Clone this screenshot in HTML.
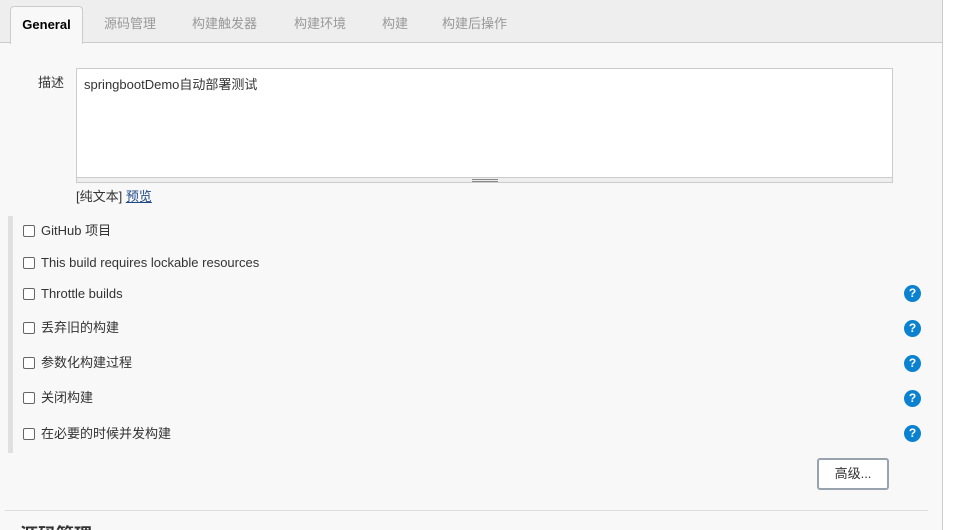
<!DOCTYPE html>
<html><head><meta charset="utf-8"><style>
*{margin:0;padding:0;box-sizing:border-box}
html,body{width:958px;height:530px;overflow:hidden}
body{background:#fff;font-family:"Liberation Sans","Noto Sans CJK SC",sans-serif;font-size:13px;color:#333;position:relative}
.main{position:absolute;left:0;top:0;width:943px;height:530px;background:#f8f8f8;border-right:1px solid #ccc;overflow:hidden}
.tabs{position:absolute;left:0;top:0;width:943px;height:43px;background:#eee;border-bottom:1px solid #ccc}
.tab{position:absolute;top:16px;font-size:13px;line-height:16px;color:#999}
.active{position:absolute;left:10px;top:6px;width:73px;height:38px;background:#f8f8f8;border:1px solid #ccc;border-bottom:none;border-radius:4px 4px 0 0;font-weight:bold;color:#000;text-align:center;padding-top:10px;line-height:16px}
.ta{position:absolute;left:76px;top:68px;width:817px;height:110px;background:#fff;border:1px solid #ccc;padding:8px 7px;font-size:13px;line-height:16px;color:#333}
.grip{position:absolute;left:76px;top:177px;width:817px;height:6px;background:#eee;border:1px solid #ccc}
.grip i{position:absolute;left:395px;top:1px;width:26px;height:3px;border-top:1px solid #888;border-bottom:1px solid #888}
.bar{position:absolute;left:8px;top:216px;width:5px;height:237px;background:#e0e0e0}
.row{position:absolute;left:23px;font-size:13px;line-height:16px;height:16px;color:#333;display:flex;align-items:center}
.cb{width:12px;height:12px;border:1px solid #666;border-radius:2px;background:#fff;margin-right:6px}
.h{position:absolute;left:904px;width:17px;height:17px;border-radius:50%;background:#0b82d0;color:#fff;font-weight:bold;font-size:12px;text-align:center;line-height:17px}
.btn{position:absolute;left:817px;top:458px;width:72px;height:32px;border:2px solid #99a3ad;border-radius:3px;background:#fff;text-align:center;line-height:28px;font-size:13px;color:#333}
</style></head><body>
<div class="main">
<div class="tabs">
<div class="active">General</div>
<div class="tab" style="left:104px">源码管理</div>
<div class="tab" style="left:192px">构建触发器</div>
<div class="tab" style="left:294px">构建环境</div>
<div class="tab" style="left:382px">构建</div>
<div class="tab" style="left:442px">构建后操作</div>
</div>
<div style="position:absolute;left:38px;top:75px;line-height:16px">描述</div>
<div class="ta">springbootDemo自动部署测试</div>
<div class="grip"><i></i></div>
<div style="position:absolute;left:76px;top:189px;line-height:16px">[纯文本] <span style="color:#204a87;text-decoration:underline">预览</span></div>
<div class="bar"></div>
<div class="row" style="top:223px"><span class="cb"></span>GitHub 项目</div>
<div class="row" style="top:255px"><span class="cb"></span>This build requires lockable resources</div>
<div class="row" style="top:286px"><span class="cb"></span>Throttle builds</div>
<div class="row" style="top:320px"><span class="cb"></span>丢弃旧的构建</div>
<div class="row" style="top:355px"><span class="cb"></span>参数化构建过程</div>
<div class="row" style="top:390px"><span class="cb"></span>关闭构建</div>
<div class="row" style="top:426px"><span class="cb"></span>在必要的时候并发构建</div>
<div class="h" style="top:285px">?</div>
<div class="h" style="top:320px">?</div>
<div class="h" style="top:355px">?</div>
<div class="h" style="top:390px">?</div>
<div class="h" style="top:425px">?</div>
<div class="btn">高级...</div>
<div style="position:absolute;left:5px;top:510px;width:923px;height:1px;background:#ddd"></div>
<div style="position:absolute;left:20px;top:524px;font-size:18px;line-height:22px;font-weight:bold;color:#333">源码管理</div>
</div>
</body></html>
